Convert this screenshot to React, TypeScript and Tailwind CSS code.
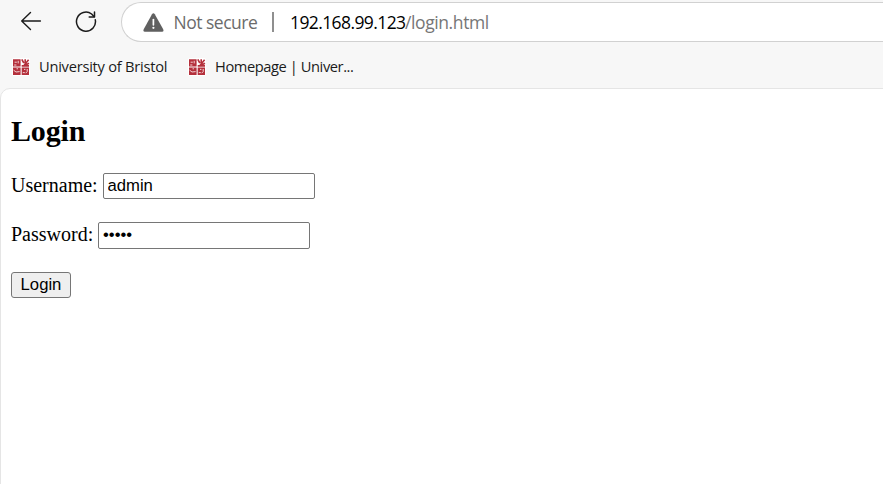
import { useState } from "react";

function BackIcon() {
  return (
    <svg width="22" height="20" viewBox="0 0 22 20" fill="none" stroke="#1b1b1b" strokeWidth="1.4" strokeLinecap="round" strokeLinejoin="round">
      <path d="M10.5 1.6 1.7 10l8.8 8.4M1.7 10H20.4" />
    </svg>
  );
}

function ReloadIcon() {
  return (
    <svg width="22" height="22" viewBox="0 0 22 22" fill="none" stroke="#1b1b1b" strokeWidth="1.5" strokeLinecap="round" strokeLinejoin="round">
      <path d="M20.3 9.8A9.5 9.5 0 1 1 16.6 4L19 6.6" />
      <path d="M19.5 2V7H14.2" />
    </svg>
  );
}

function WarningIcon() {
  return (
    <svg width="21" height="19" viewBox="0 0 21 19">
      <path d="M9 1.2Q10.4-.9 11.8 1.2L20.2 16.2Q21.1 18.6 19 18.7H2Q-.2 18.6.7 16.2Z" fill="#606060" />
      <path d="M10.4 6.6v5.2" stroke="#fff" strokeWidth="1.7" strokeLinecap="round" />
      <circle cx="10.4" cy="14.8" r="1.1" fill="#fff" />
    </svg>
  );
}

function BristolIcon() {
  return (
    <svg width="18" height="18" viewBox="0 0 18 18">
      <rect width="18" height="18" rx="2" fill="#fff" />
      <path d="M1 1.2h7.6v7.4H1zM1 9.5h7.6V17H1zM9.7 9.5H17V17H9.7z" fill="#b4303c" />
      <path d="M9.8 1.4 11.8 5M13.2 1.2v5M16.6 1.8 12 7.4M17 5.2 12.6 7.6M9.7 7.9H17" stroke="#b4303c" strokeWidth="1.6" fill="none" />
      <g fill="none" stroke="#f3d3d5" strokeWidth="1">
        <path d="M2.6 4.2h2.2M6.2 2.8v2.6M2.2 7h2.2M1.6 12.2l2.4 1.8 3.6-.4M5.2 10v1.4M10.8 14.6h2M15.2 11v2.6l-1.6 1.6M12 11.4h1.4" />
      </g>
    </svg>
  );
}

function Bookmark({ label, spacing }: { label: string; spacing: string }) {
  return (
    <a className="flex items-center gap-[9px] whitespace-nowrap text-[14.67px] leading-5 text-[#1b1b1b]">
      <BristolIcon />
      <span className={`pb-[2px] ${spacing}`}>{label}</span>
    </a>
  );
}

export default function App() {
  const [username, setUsername] = useState("admin");
  const [password, setPassword] = useState("admin");
  const field = "w-[212px] rounded-[2px] border border-[#767676] bg-white py-0 font-['Liberation_Sans',Arial,sans-serif] text-[16.67px] text-black outline-none";

  return (
    <div className="h-[484px] w-[883px] overflow-hidden bg-[#f7f7f7] font-['Open_Sans','Noto_Sans',sans-serif]">
      <header className="h-[88px]">
        <div className="flex h-[44px] items-start">
          <div className="pl-[20px] pt-[11px]"><BackIcon /></div>
          <div className="pl-[33px] pt-[10px]"><ReloadIcon /></div>
          <div className="ml-[24px] mt-[2px] flex h-[40px] flex-1 items-center rounded-l-full border border-r-0 border-[#d1d1d1] bg-white pl-[21px] text-[17.5px] leading-6 whitespace-nowrap">
            <WarningIcon />
            <span className="ml-[9.5px] w-[84.5px] tracking-[-0.5px] text-[#6b6b6b]">Not secure</span>
            <span className="ml-[14px] h-[20px] w-[2px] bg-[#8f8f8f]" />
            <span className="ml-[16px] w-[115px] tracking-[-0.6px] text-black">192.168.99.123</span>
            <span className="tracking-[-0.4px] text-[#767676]">/login.html</span>
          </div>
        </div>
        <nav className="flex h-[45px] items-center pl-[12px]">
          <div className="w-[176px]"><Bookmark label="University of Bristol" spacing="tracking-[-0.25px]" /></div>
          <Bookmark label="Homepage | Univer..." spacing="tracking-[-0.42px]" />
        </nav>
      </header>
      <main className="h-[400px] w-[890px] rounded-tl-[10px] border border-[#e5e5e5] bg-white pl-[10px] font-['Liberation_Serif','Times_New_Roman',serif] text-[20px] text-black">
        <form onSubmit={(event) => event.preventDefault()}>
          <h2 className="pt-[25px] text-[30px] leading-[34px] font-bold tracking-[-0.15px]">Login</h2>
          <label className="mt-[25px] flex h-[26px] items-center">
            <span className="w-[92px] pb-[2px] text-[20px] leading-6">Username:</span>
            <input className={`${field} h-[26px] px-[3.5px]`} value={username} onChange={(event) => setUsername(event.target.value)} />
          </label>
          <label className="mt-[23px] flex h-[27px] items-center">
            <span className="w-[87px] pb-[4px] text-[20px] leading-6">Password:</span>
            <input type="password" className={`${field} h-[27px] px-[4px] pb-[2px]`} value={password} onChange={(event) => setPassword(event.target.value)} />
          </label>
          <button className="mt-[23px] flex h-[26px] w-[60px] items-center justify-center rounded-[3px] border border-[#767676] bg-[#efefef] pb-[2px] font-['Liberation_Sans',Arial,sans-serif] text-[16.67px]">Login</button>
        </form>
      </main>
    </div>
  );
}
